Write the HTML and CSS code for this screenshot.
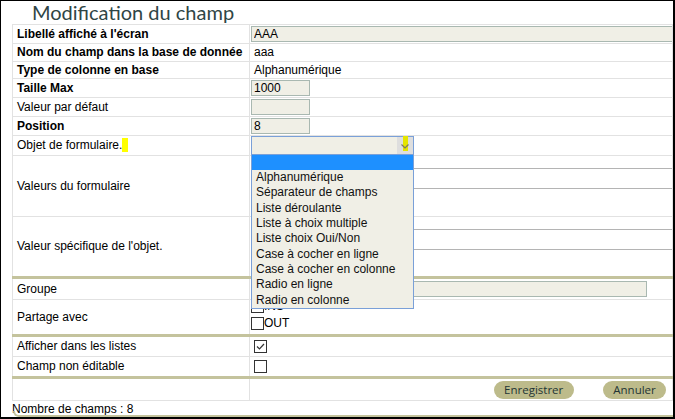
FILE: index.html
```html
<!DOCTYPE html>
<html lang="fr">
    <head>
        <meta charset="UTF-8">
        <title>Modification du champ</title>
        <link rel="stylesheet" href="styles.css">
    </head>
    <body>
        <div class="window">
            <h1 class="title">Modification du champ</h1>
            <table class="form-table">
                <colgroup>
                    <col class="col-label">
                    <col>
                </colgroup>
                <tr class="h19">
                    <td class="label strong">Libellé affiché à l'écran</td>
                    <td><input type="text" class="field wide" value="AAA"></td>
                </tr>
                <tr class="h18">
                    <td class="label strong">Nom du champ dans la base de donnée</td>
                    <td class="value">aaa</td>
                </tr>
                <tr class="h17">
                    <td class="label strong">Type de colonne en base</td>
                    <td class="value">Alphanumérique</td>
                </tr>
                <tr class="h19">
                    <td class="label strong">Taille Max</td>
                    <td><input type="text" class="field short" value="1000"></td>
                </tr>
                <tr class="h19">
                    <td class="label">Valeur par défaut</td>
                    <td><input type="text" class="field short"></td>
                </tr>
                <tr class="h19">
                    <td class="label strong">Position</td>
                    <td><input type="text" class="field short" value="8"></td>
                </tr>
                <tr class="h20">
                    <td class="label">Objet de formulaire.<span class="mark"></span></td>
                    <td>
                        <div class="select-wrap">
                            <div class="select">
                                <span class="select-text"></span>
                                <span class="select-arrow">
                                    <span class="arrow-mark"></span>
                                    <svg width="8" height="5" viewBox="0 0 8 5"><polyline points="0.5,0.5 4,4 7.5,0.5" fill="none" stroke="#7a7a6a" stroke-width="1.2"/></svg>
                                </span>
                            </div>
                            <ul class="options">
                                <li class="selected">&nbsp;</li>
                                <li>Alphanumérique</li>
                                <li>Séparateur de champs</li>
                                <li>Liste déroulante</li>
                                <li>Liste à choix multiple</li>
                                <li>Liste choix Oui/Non</li>
                                <li>Case à cocher en ligne</li>
                                <li>Case à cocher en colonne</li>
                                <li>Radio en ligne</li>
                                <li>Radio en colonne</li>
                            </ul>
                        </div>
                    </td>
                </tr>
                <tr class="h61">
                    <td class="label">Valeurs du formulaire</td>
                    <td class="top"><textarea class="area"></textarea></td>
                </tr>
                <tr class="h61">
                    <td class="label">Valeur spécifique de l'objet.</td>
                    <td class="top"><textarea class="area"></textarea></td>
                </tr>
                <tr class="h22 sep">
                    <td class="label">Groupe</td>
                    <td><input type="text" class="field group"></td>
                </tr>
                <tr class="h36">
                    <td class="label">Partage avec</td>
                    <td class="value checks">
                        <div class="check-line"><span class="check"></span>INS</div>
                        <div class="check-line"><span class="check"></span>OUT</div>
                    </td>
                </tr>
                <tr class="h21 sep">
                    <td class="label">Afficher dans les listes</td>
                    <td class="value">
                        <span class="check">
                            <svg width="11" height="11" viewBox="0 0 11 11"><polyline points="2,5.5 4.5,8 9,3" fill="none" stroke="#333" stroke-width="1.2"/></svg>
                        </span>
                    </td>
                </tr>
                <tr class="h21">
                    <td class="label">Champ non éditable</td>
                    <td class="value"><span class="check"></span></td>
                </tr>
                <tr class="h23 sep">
                    <td class="label"></td>
                    <td class="actions">
                        <button class="pill save">Enregistrer</button>
                        <button class="pill cancel">Annuler</button>
                    </td>
                </tr>
            </table>
            <p class="count">Nombre de champs : 8</p>
            <div class="panel-bottom"></div>
        </div>
    </body>
</html>
```

FILE: styles.css
```css
*{
    margin: 0;
    padding: 0;
    box-sizing: border-box;
}

body{
    background-color: white;
    font-family: "Liberation Sans", Arial, sans-serif;
    font-size: 12px;
    color: black;
}

.window{
    position: relative;
    width: 675px;
    height: 419px;
    border-top: 1px solid black;
    border-left: 1px solid black;
    border-right: 2px solid black;
    border-bottom: 2px solid black;
    overflow: hidden;
}

.title{
    height: 23px;
    padding-left: 31px;
    font-family: Lato, "Open Sans", sans-serif;
    font-size: 20px;
    font-weight: normal;
    line-height: 22px;
    color: #2f4545;
}

.form-table{
    margin-left: 11px;
    width: 661px;
    table-layout: fixed;
    border-collapse: collapse;
}

.col-label{
    width: 237px;
}

.form-table td{
    border: 1px solid #e2e2e2;
    padding: 0 1px;
    vertical-align: middle;
    line-height: 15px;
    white-space: nowrap;
}

.form-table td.label{
    padding-left: 4px;
}

.form-table td.value{
    padding-left: 4px;
}

.form-table td.top{
    vertical-align: top;
    padding-top: 12px;
}

.form-table td.checks{
    vertical-align: top;
    padding-top: 0;
}

.strong{
    font-weight: bold;
}

.h17{ height: 17px; }
.h18{ height: 18px; }
.h19{ height: 19px; }
.h20{ height: 20px; }
.h21{ height: 21px; }
.h22{ height: 22px; }
.h23{ height: 23px; }
.h36{ height: 36px; }
.h61{ height: 61px; }

.form-table tr.sep td{
    border-top: 3px solid #c4c39d;
}

.field{
    display: block;
    height: 16px;
    border: 1px solid #a9b8b1;
    background-color: #f0efe6;
    padding: 0 2px;
    font-family: "Liberation Sans", Arial, sans-serif;
    font-size: 12px;
    color: black;
    outline: none;
}

.wide{ width: 460px; }
.short{ width: 59px; }
.group{ width: 396px; }

.area{
    display: block;
    width: 460px;
    height: 21px;
    border: 1px solid #b4b4b4;
    background-color: white;
    resize: none;
    overflow: hidden;
}

.mark{
    display: inline-block;
    width: 6px;
    height: 14px;
    vertical-align: -3px;
    background-color: #ffff00;
}

.select-wrap{
    position: relative;
    width: 163px;
}

.select{
    display: flex;
    height: 19px;
    border: 1px solid #7aa0d8;
    background-color: #f0efe6;
}

.select-text{
    flex: 1;
}

.select-arrow{
    position: relative;
    display: flex;
    align-items: center;
    justify-content: center;
    width: 16px;
    background-color: #dedede;
}

.arrow-mark{
    position: absolute;
    top: -1px;
    left: 6px;
    width: 5px;
    height: 15px;
    background-color: #e5e500;
}

.select-arrow svg{
    position: relative;
    margin-top: 2px;
}

.options{
    position: absolute;
    top: 18px;
    left: 0;
    width: 163px;
    list-style: none;
    border: 1px solid #7aa0d8;
    background-color: #f0efe6;
    z-index: 2;
}

.options li{
    height: 15.35px;
    line-height: 15px;
    padding-left: 4px;
    color: #111;
}

.options li.selected{
    height: 15px;
    background-color: #1e90ff;
}

.check-line{
    display: flex;
    align-items: flex-end;
    height: 13px;
    margin-bottom: 4px;
    margin-left: -3px;
    line-height: 13px;
}

.check{
    display: inline-flex;
    align-items: center;
    justify-content: center;
    width: 13px;
    height: 13px;
    border: 1px solid #333;
    background-color: white;
    vertical-align: middle;
}

.actions{
    text-align: right;
    padding-right: 6px !important;
}

.pill{
    height: 18px;
    padding: 0;
    border: none;
    border-radius: 9px;
    background-color: #bdbb8b;
    font-family: "Open Sans", sans-serif;
    font-size: 11.5px;
    line-height: 18px;
    color: #233535;
}

.save{
    width: 80px;
}

.cancel{
    width: 63px;
    margin-left: 26px;
}

.count{
    padding: 1px 0 0 11px;
    line-height: 14px;
}

.panel-bottom{
    position: absolute;
    left: 12px;
    right: 0;
    bottom: 0;
    height: 6px;
    border-left: 2px solid #c4c39d;
    border-bottom: 2px solid #c4c39d;
    border-bottom-left-radius: 8px;
}
```
